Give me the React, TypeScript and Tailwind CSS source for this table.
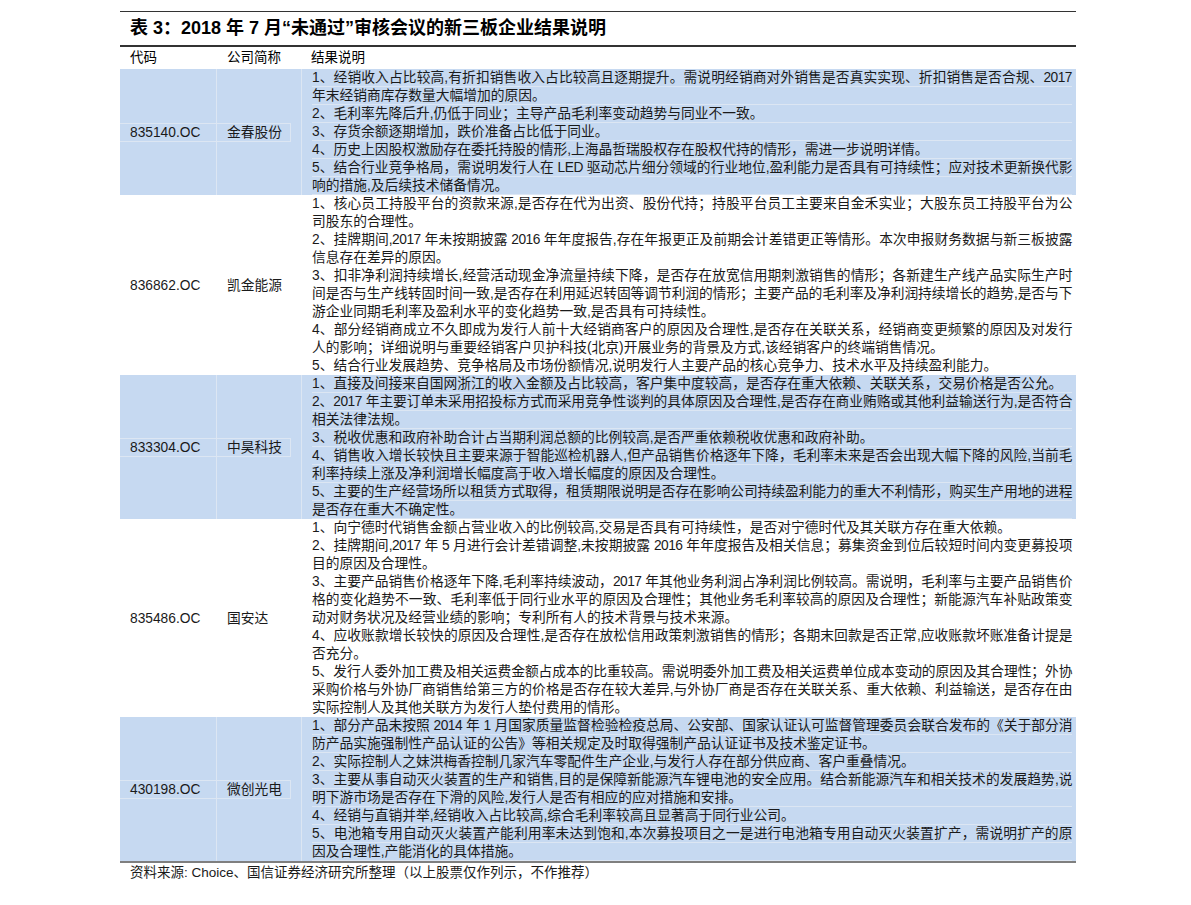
type Row = {
  code: string;
  name: string;
  blue: boolean;
  items: string[][];
};

const rows: Row[] = [
  {
    code: '835140.OC',
    name: '金春股份',
    blue: true,
    items: [
      [
        '1、经销收入占比较高,有折扣销售收入占比较高且逐期提升。需说明经销商对外销售是否真实实现、折扣销售是否合规、2017',
        '年末经销商库存数量大幅增加的原因。',
      ],
      ['2、毛利率先降后升,仍低于同业；主导产品毛利率变动趋势与同业不一致。'],
      ['3、存货余额逐期增加，跌价准备占比低于同业。'],
      ['4、历史上因股权激励存在委托持股的情形,上海晶哲瑞股权存在股权代持的情形，需进一步说明详情。'],
      [
        '5、结合行业竞争格局，需说明发行人在 LED 驱动芯片细分领域的行业地位,盈利能力是否具有可持续性；应对技术更新换代影',
        '响的措施,及后续技术储备情况。',
      ],
    ],
  },
  {
    code: '836862.OC',
    name: '凯金能源',
    blue: false,
    items: [
      [
        '1、核心员工持股平台的资款来源,是否存在代为出资、股份代持；持股平台员工主要来自金禾实业；大股东员工持股平台为公',
        '司股东的合理性。',
      ],
      [
        '2、挂牌期间,2017 年未按期披露 2016 年年度报告,存在年报更正及前期会计差错更正等情形。本次申报财务数据与新三板披露',
        '信息存在差异的原因。',
      ],
      [
        '3、扣非净利润持续增长,经营活动现金净流量持续下降，是否存在放宽信用期刺激销售的情形；各新建生产线产品实际生产时',
        '间是否与生产线转固时间一致,是否存在利用延迟转固等调节利润的情形；主要产品的毛利率及净利润持续增长的趋势,是否与下',
        '游企业同期毛利率及盈利水平的变化趋势一致,是否具有可持续性。',
      ],
      [
        '4、部分经销商成立不久即成为发行人前十大经销商客户的原因及合理性,是否存在关联关系，经销商变更频繁的原因及对发行',
        '人的影响；详细说明与重要经销客户贝护科技(北京)开展业务的背景及方式,该经销客户的终端销售情况。',
      ],
      ['5、结合行业发展趋势、竞争格局及市场份额情况,说明发行人主要产品的核心竞争力、技术水平及持续盈利能力。'],
    ],
  },
  {
    code: '833304.OC',
    name: '中昊科技',
    blue: true,
    items: [
      ['1、直接及间接来自国网浙江的收入金额及占比较高，客户集中度较高，是否存在重大依赖、关联关系，交易价格是否公允。'],
      [
        '2、2017 年主要订单未采用招投标方式而采用竞争性谈判的具体原因及合理性,是否存在商业贿赂或其他利益输送行为,是否符合',
        '相关法律法规。',
      ],
      ['3、税收优惠和政府补助合计占当期利润总额的比例较高,是否严重依赖税收优惠和政府补助。'],
      [
        '4、销售收入增长较快且主要来源于智能巡检机器人,但产品销售价格逐年下降，毛利率未来是否会出现大幅下降的风险,当前毛',
        '利率持续上涨及净利润增长幅度高于收入增长幅度的原因及合理性。',
      ],
      [
        '5、主要的生产经营场所以租赁方式取得，租赁期限说明是否存在影响公司持续盈利能力的重大不利情形，购买生产用地的进程',
        '是否存在重大不确定性。',
      ],
    ],
  },
  {
    code: '835486.OC',
    name: '国安达',
    blue: false,
    items: [
      ['1、向宁德时代销售金额占营业收入的比例较高,交易是否具有可持续性，是否对宁德时代及其关联方存在重大依赖。'],
      [
        '2、挂牌期间,2017 年 5 月进行会计差错调整,未按期披露 2016 年年度报告及相关信息；募集资金到位后较短时间内变更募投项',
        '目的原因及合理性。',
      ],
      [
        '3、主要产品销售价格逐年下降,毛利率持续波动，2017 年其他业务利润占净利润比例较高。需说明，毛利率与主要产品销售价',
        '格的变化趋势不一致、毛利率低于同行业水平的原因及合理性；其他业务毛利率较高的原因及合理性；新能源汽车补贴政策变',
        '动对财务状况及经营业绩的影响；专利所有人的技术背景与技术来源。',
      ],
      [
        '4、应收账款增长较快的原因及合理性,是否存在放松信用政策刺激销售的情形；各期末回款是否正常,应收账款坏账准备计提是',
        '否充分。',
      ],
      [
        '5、发行人委外加工费及相关运费金额占成本的比重较高。需说明委外加工费及相关运费单位成本变动的原因及其合理性；外协',
        '采购价格与外协厂商销售给第三方的价格是否存在较大差异,与外协厂商是否存在关联关系、重大依赖、利益输送，是否存在由',
        '实际控制人及其他关联方为发行人垫付费用的情形。',
      ],
    ],
  },
  {
    code: '430198.OC',
    name: '微创光电',
    blue: true,
    items: [
      [
        '1、部分产品未按照 2014 年 1 月国家质量监督检验检疫总局、公安部、国家认证认可监督管理委员会联合发布的《关于部分消',
        '防产品实施强制性产品认证的公告》等相关规定及时取得强制产品认证证书及技术鉴定证书。',
      ],
      ['2、实际控制人之妹洪梅香控制几家汽车零配件生产企业,与发行人存在部分供应商、客户重叠情况。'],
      [
        '3、主要从事自动灭火装置的生产和销售,目的是保障新能源汽车锂电池的安全应用。结合新能源汽车和相关技术的发展趋势,说',
        '明下游市场是否存在下滑的风险,发行人是否有相应的应对措施和安排。',
      ],
      ['4、经销与直销并举,经销收入占比较高,综合毛利率较高且显著高于同行业公司。'],
      [
        '5、电池箱专用自动灭火装置产能利用率未达到饱和,本次募投项目之一是进行电池箱专用自动灭火装置扩产，需说明扩产的原',
        '因及合理性,产能消化的具体措施。',
      ],
    ],
  },
];

function TableRow({ row }: { row: Row }) {
  const line = row.blue ? 'border-[#dce6f3]' : 'border-transparent';
  return (
    <div className={`flex ${row.blue ? 'bg-[#c6d9f1]' : 'bg-white'}`}>
      <div className="w-[96px] shrink-0 flex flex-col justify-center">
        <div className={`h-[19px] leading-[18px] pl-[10px] border-y ${line} whitespace-nowrap`}>{row.code}</div>
      </div>
      <div className={`w-[85px] shrink-0 flex flex-col justify-center border-l ${line}`}>
        <div className={`w-[74px] h-[19px] leading-[18px] pl-[10px] border-y border-r ${line} whitespace-nowrap`}>
          {row.name}
        </div>
      </div>
      <div className={`flex-1 border-l ${line} pl-[10px] pr-[4px]`}>
        {row.items.map((lines, i) =>
          lines.map((t, k) => (
            <div
              key={`${i}-${k}`}
              className={`h-[18px] leading-[17px] border-b ${line} ${
                k < lines.length - 1
                  ? 'text-justify [text-align-last:justify] tracking-[-0.5px]'
                  : 'whitespace-nowrap'
              }`}
            >
              {t}
            </div>
          ))
        )}
      </div>
    </div>
  );
}

export default function App() {
  return (
    <div className="min-h-[905px] bg-white text-[#1a1a1a] font-['Liberation_Sans','Noto_Sans_CJK_SC',sans-serif]">
      <div className="ml-[120px] w-[956px] pt-[11px]">
        <div className="border-t border-[#333]" />
        <div className="h-[33px] flex items-center pl-[10px] text-[18px] font-bold text-black whitespace-nowrap">
          表 3：2018 年 7 月“未通过”审核会议的新三板企业结果说明
        </div>
        <div className="h-[2px] bg-[#333]" />

        <div className="flex h-[22px] items-center text-[13.5px] text-black">
          <div className="w-[96px] pl-[10px]">代码</div>
          <div className="w-[85px] pl-[11px]">公司简称</div>
          <div className="flex-1 pl-[10px]">结果说明</div>
        </div>

        <div className="text-[13.75px]">
          {rows.map((r) => (
            <TableRow key={r.code} row={r} />
          ))}
        </div>
        <div className="h-[2px] bg-[#7f7f7f]" />

        <div className="h-[20px] leading-[20px] pl-[10px] text-[13.5px] whitespace-nowrap">
          资料来源: Choice、国信证券经济研究所整理（以上股票仅作列示，不作推荐）
        </div>
      </div>
    </div>
  );
}
